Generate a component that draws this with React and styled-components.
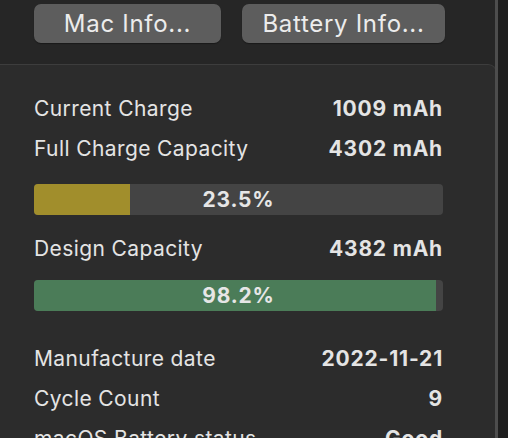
import React from "react";
import styled, { createGlobalStyle } from "styled-components";

const Global = createGlobalStyle`
  html, body { margin: 0; padding: 0; background: #262626; }
  body { font-family: Inter, "Noto Sans", sans-serif; -webkit-font-smoothing: antialiased; }
`;

const Window = styled.div`
  display: flex;
  width: 508px;
  height: 438px;
  overflow: hidden;
  background: #262626;
`;

const Main = styled.div`
  width: 495px;
  flex: none;
  display: flex;
  flex-direction: column;
  padding-top: 4px;
  box-sizing: border-box;
`;

const Divider = styled.div`
  width: 3px;
  flex: none;
  background: #4d4d4d;
`;

const Strip = styled.div`
  flex: 1;
  background: #1e1e1e;
`;

const ButtonRow = styled.div`
  display: flex;
  gap: 21px;
  padding-left: 34px;
`;

const Button = styled.button`
  width: ${(p) => p.$w}px;
  height: 39px;
  border: none;
  border-radius: 7px;
  background: #5d5d5d;
  color: #ececec;
  font-family: Inter, "Noto Sans", sans-serif;
  font-size: 24px;
  font-weight: 400;
  letter-spacing: 0.7px;
  padding: 0;
  box-shadow: 0 1px 1px rgba(0,0,0,0.35);
`;

const Panel = styled.div`
  margin-top: 21px;
  margin-left: -12px;
  flex: 1;
  background: #2c2c2c;
  border-top: 1px solid #3d3d3d;
  border-right: 1px solid #3d3d3d;
  border-top-right-radius: 9px;
  padding: 23px 0 0 46px;
  box-sizing: border-box;
  display: flex;
  flex-direction: column;
  width: 509px;
`;

const Row = styled.div`
  display: flex;
  justify-content: space-between;
  align-items: center;
  height: 40px;
  width: 408px;
  color: #e4e4e4;
  font-size: 21px;
  margin-top: ${(p) => p.$mt || 0}px;
`;

const Label = styled.span`
  font-weight: 400;
  letter-spacing: 0.4px;
`;

const Value = styled.span`
  font-weight: 700;
  letter-spacing: 0.8px;
  margin-right: -1px;
`;

const Track = styled.div`
  position: relative;
  width: 409px;
  height: 31px;
  border-radius: 4px;
  background: #444444;
  overflow: hidden;
  margin-top: ${(p) => p.$mt}px;
  display: flex;
  align-items: center;
  justify-content: center;
`;

const Fill = styled.div`
  position: absolute;
  left: 0;
  top: 0;
  bottom: 0;
  background: ${(p) => p.$color};
`;

const BarText = styled.span`
  position: relative;
  color: #e6e6e6;
  font-size: 21px;
  font-weight: 700;
  letter-spacing: 0.8px;
`;

function Bar({ pct, color, mt }) {
  return (
    <Track $mt={mt}>
      <Fill $color={color} style={{ width: `${pct}%` }} />
      <BarText>{pct.toFixed(1)}%</BarText>
    </Track>
  );
}

export default function App() {
  return (
    <>
      <Global />
      <Window>
        <Main>
          <ButtonRow>
            <Button $w={187}>Mac Info...</Button>
            <Button $w={203}>Battery Info...</Button>
          </ButtonRow>
          <Panel>
            <Row>
              <Label>Current Charge</Label>
              <Value>1009 mAh</Value>
            </Row>
            <Row>
              <Label>Full Charge Capacity</Label>
              <Value>4302 mAh</Value>
            </Row>
            <Bar pct={23.5} color="#a18e2c" mt={16} />
            <Row $mt={13}>
              <Label>Design Capacity</Label>
              <Value>4382 mAh</Value>
            </Row>
            <Bar pct={98.2} color="#4b7c58" mt={12} />
            <Row $mt={27}>
              <Label>Manufacture date</Label>
              <Value>2022-11-21</Value>
            </Row>
            <Row>
              <Label>Cycle Count</Label>
              <Value>9</Value>
            </Row>
            <Row>
              <Label>macOS Battery status</Label>
              <Value>Good</Value>
            </Row>
          </Panel>
        </Main>
        <Divider />
        <Strip />
      </Window>
    </>
  );
}
